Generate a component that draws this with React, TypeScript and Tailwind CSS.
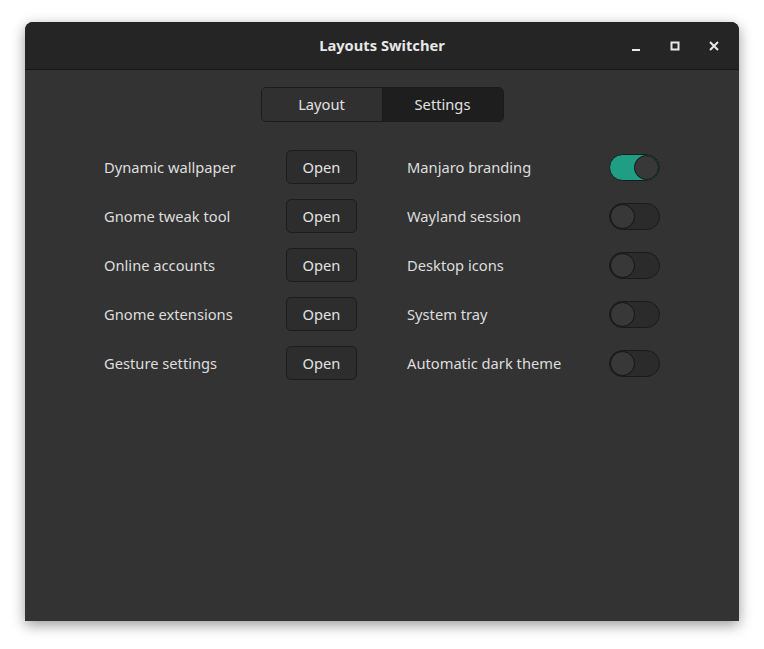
import { useState } from "react";

const leftRows = [
  "Dynamic wallpaper",
  "Gnome tweak tool",
  "Online accounts",
  "Gnome extensions",
  "Gesture settings",
];

const rightRows: { label: string; on: boolean }[] = [
  { label: "Manjaro branding", on: true },
  { label: "Wayland session", on: false },
  { label: "Desktop icons", on: false },
  { label: "System tray", on: false },
  { label: "Automatic dark theme", on: false },
];

function Toggle({ on, onClick }: { on: boolean; onClick: () => void }) {
  return (
    <button
      onClick={onClick}
      className={`flex h-[27px] w-[51px] items-center rounded-full border border-[#1a1a1a] ${
        on ? "justify-end bg-[#1f9e84]" : "justify-start bg-[#2b2b2b]"
      }`}
    >
      <span className="h-[25px] w-[25px] rounded-full border border-[#141414] bg-[#383838]" />
    </button>
  );
}

export default function App() {
  const [tab, setTab] = useState<"layout" | "settings">("settings");
  const [toggles, setToggles] = useState(rightRows.map((r) => r.on));

  return (
    <div
      className="h-[649px] w-[764px] bg-white pl-[25px] pt-[22px]"
      style={{ fontFamily: '"Noto Sans", "Open Sans", sans-serif' }}
    >
      <div className="flex h-[599px] w-[714px] flex-col overflow-hidden rounded-t-[8px] bg-[#333333] shadow-[0_4px_14px_rgba(0,0,0,0.4)]">
        <header className="relative flex h-[48px] shrink-0 items-center justify-center border-b border-[#171717] bg-[#252525]">
          <span className="text-[14.7px] font-bold text-[#e8e8e8]">Layouts Switcher</span>
          <div className="absolute right-[19px] top-0 flex h-full items-center gap-[27px] text-[#e8e8e8]">
            <svg width="12" height="12" viewBox="0 0 12 12" className="mt-[2px]">
              <rect x="2" y="8" width="8" height="2" fill="currentColor" />
            </svg>
            <svg width="12" height="12" viewBox="0 0 12 12">
              <rect x="2.5" y="2.5" width="7" height="7" fill="none" stroke="currentColor" strokeWidth="2" />
            </svg>
            <svg width="12" height="12" viewBox="0 0 12 12">
              <path d="M2 2 L10 10 M10 2 L2 10" stroke="currentColor" strokeWidth="2" />
            </svg>
          </div>
        </header>

        <div className="flex flex-col items-center px-[79px] pt-[17px]">
          <div className="flex h-[35px] overflow-hidden rounded-[5px] border border-[#1b1b1b] text-[14.7px] text-[#e2e2e2]">
            <button
              onClick={() => setTab("layout")}
              className={`w-[120px] ${tab === "layout" ? "bg-[#1e1e1e]" : "bg-[#303030]"}`}
            >
              Layout
            </button>
            <button
              onClick={() => setTab("settings")}
              className={`w-[121px] border-l border-[#1b1b1b] ${
                tab === "settings" ? "bg-[#1e1e1e]" : "bg-[#303030]"
              }`}
            >
              Settings
            </button>
          </div>

          <div className="mt-[28px] grid w-full grid-cols-2 gap-x-[50px]">
            <div className="flex flex-col gap-[15px]">
              {leftRows.map((label) => (
                <div key={label} className="flex h-[34px] items-center justify-between">
                  <span className="text-[14.7px] text-[#dedede]">{label}</span>
                  <button className="h-[34px] w-[71px] rounded-[5px] border border-[#1c1c1c] bg-[#2d2d2d] text-[14.7px] text-[#e2e2e2]">
                    Open
                  </button>
                </div>
              ))}
            </div>
            <div className="flex flex-col gap-[15px]">
              {rightRows.map((row, i) => (
                <div key={row.label} className="flex h-[34px] items-center justify-between">
                  <span className="text-[14.7px] text-[#dedede]">{row.label}</span>
                  <Toggle
                    on={toggles[i]}
                    onClick={() => setToggles((t) => t.map((v, j) => (j === i ? !v : v)))}
                  />
                </div>
              ))}
            </div>
          </div>
        </div>
      </div>
    </div>
  );
}
